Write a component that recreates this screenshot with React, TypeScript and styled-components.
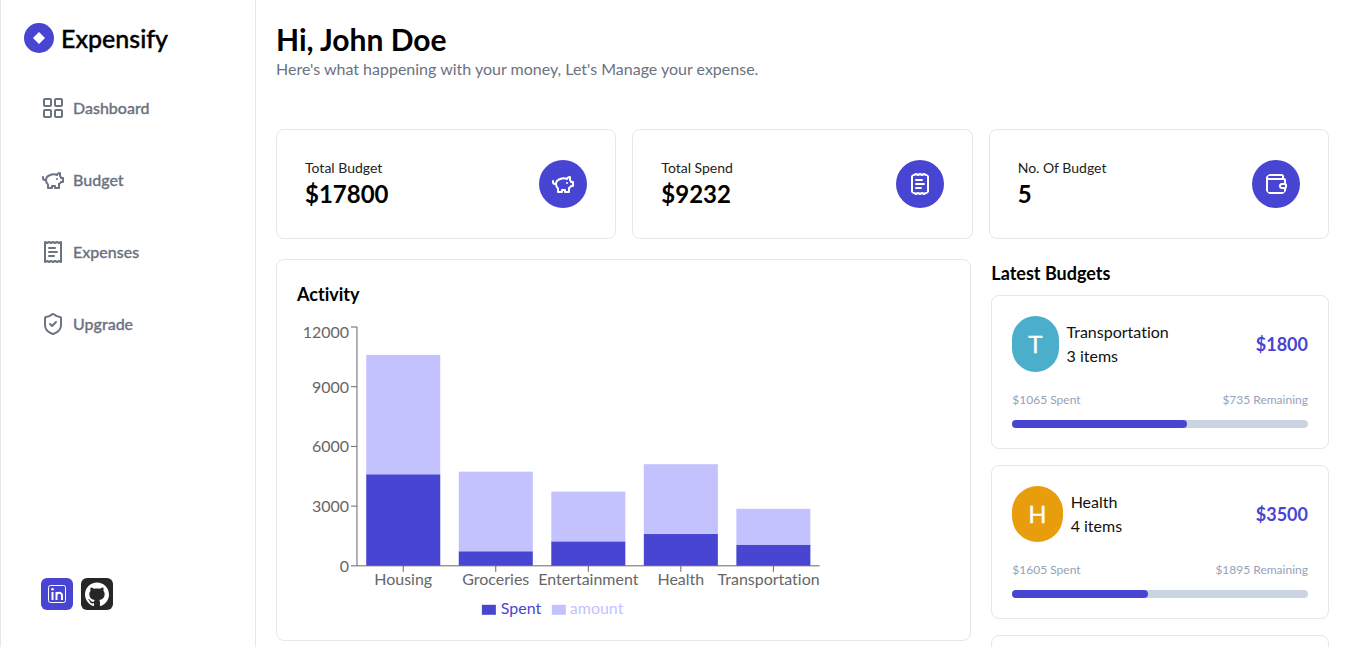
import React from "react";
import styled, { createGlobalStyle } from "styled-components";

const PRIMARY = "#4845d2";
const SOFT = "#c3c2ff";
const BORDER = "#e5e7eb";
const MUTED = "#6b7280";
const AXIS = "#666666";

const GlobalStyle = createGlobalStyle`
  *, *::before, *::after { box-sizing: border-box; }
  html { scrollbar-width: none; }
  body { margin: 0; background: #fff; color: #000; font: 16px/24px Lato, sans-serif; font-variant-ligatures: none; }
  h1, h2, p, ul { margin: 0; padding: 0; }
  ul { list-style: none; }
  a { color: inherit; text-decoration: none; }
`;

const Shell = styled.div`
  display: flex;
  align-items: flex-start;
`;
const Sidebar = styled.aside`
  position: sticky;
  top: 0;
  flex: 0 0 256px;
  height: 100vh;
  display: flex;
  flex-direction: column;
  border: solid ${BORDER};
  border-width: 0 1px;
  padding: 20px 20px 37px 23px;
`;
const Brand = styled.a`
  display: flex;
  align-items: center;
  gap: 7px;
  height: 36px;
  font-size: 25px;
  line-height: 32px;
  font-weight: 500;
  -webkit-text-stroke: 0.4px currentColor;
`;
const Nav = styled.nav`
  flex: 1;
  margin-top: 20px;
`;
const NavLink = styled.a`
  display: flex;
  align-items: center;
  gap: 8px;
  height: 64px;
  padding: 0 17px;
  margin-bottom: 8px;
  color: ${MUTED};
  font-size: 16px;
  font-weight: 500;
  -webkit-text-stroke: 0.3px currentColor;
`;
const Socials = styled.div`
  display: flex;
  gap: 8px;
  padding-left: 17px;
`;
const SocialLink = styled.a`
  display: flex;
  height: 32px;
`;
const Main = styled.main`
  flex: 1;
  min-width: 0;
  padding: 21px 18px 20px 20px;
`;
const Greeting = styled.h1`
  font-size: 30px;
  line-height: 36px;
  font-weight: 700;
`;
const Subtitle = styled.p`
  color: ${MUTED};
`;
const Stats = styled.section`
  display: grid;
  grid-template-columns: repeat(3, minmax(0, 1fr));
  gap: 16px;
  margin-top: 48px;
`;
const Card = styled.div`
  border: 1px solid ${BORDER};
  border-radius: 8px;
  padding: 20px;
`;
const StatCard = styled(Card)`
  display: flex;
  align-items: center;
  justify-content: space-between;
  padding: 28px;
`;
const StatLabel = styled.p`
  font-size: 14px;
  line-height: 20px;
  color: #222;
`;
const StatValue = styled.p`
  font-size: 24px;
  line-height: 32px;
  font-weight: 700;
`;
const Overview = styled.section`
  display: grid;
  grid-template-columns: repeat(3, minmax(0, 1fr));
  align-items: start;
  gap: 20px;
  margin-top: 20px;
`;
const ChartCard = styled(Card)`
  grid-column: span 2;
`;
const Heading = styled.h2`
  font-size: 18px;
  line-height: 28px;
  font-weight: 700;
`;
const Chart = styled.svg`
  display: block;
  width: 80%;
  font-size: 16px;
`;
const BudgetList = styled.ul`
  display: grid;
  gap: 16px;
  margin-top: 8px;
`;
const BudgetTop = styled.div`
  display: flex;
  align-items: center;
  gap: 8px;
`;
const Avatar = styled.span<{ $color: string }>`
  padding: 12px 16px;
  border-radius: 28px;
  background: ${(p) => p.$color};
  color: #fff;
  font-size: 24px;
  line-height: 32px;
  -webkit-text-stroke: 0.3px currentColor;
`;
const BudgetName = styled.div`
  flex: 1;
  color: #111;
`;
const BudgetAmount = styled.strong`
  color: ${PRIMARY};
  font-size: 18px;
  line-height: 28px;
`;
const Split = styled.div`
  display: flex;
  justify-content: space-between;
  margin: 20px 0 12px;
  color: #94a3b8;
  font-size: 12px;
  line-height: 16px;
`;
const Track = styled.div`
  height: 8px;
  border-radius: 4px;
  background: #cbd5e1;
`;
const Fill = styled.div`
  height: 8px;
  border-radius: 4px;
  background: ${PRIMARY};
`;
const Badge = styled.svg`
  width: 48px;
  height: 48px;
  padding: 12px;
  border-radius: 50%;
  background: ${PRIMARY};
  color: #fff;
`;

const glyphs = {
  grid: (
    <>
      <rect width="7" height="7" x="3" y="3" rx="1" />
      <rect width="7" height="7" x="14" y="3" rx="1" />
      <rect width="7" height="7" x="14" y="14" rx="1" />
      <rect width="7" height="7" x="3" y="14" rx="1" />
    </>
  ),
  piggy: (
    <>
      <path d="M19 5c-1.5 0-2.8 1.4-3 2-3.5-1.5-11-.3-11 5 0 1.8 0 3 2 4.5V20h4v-2h3v2h4v-4c1-.5 1.7-1 2-2h2v-4h-2c0-1-.5-1.5-1-2V5z" />
      <path d="M2 9v1c0 1.1.9 2 2 2h1" />
      <path d="M16 11h.01" />
    </>
  ),
  receipt: (
    <>
      <path d="M4 2v20l2-1 2 1 2-1 2 1 2-1 2 1 2-1 2 1V2l-2 1-2-1-2 1-2-1-2 1-2-1-2 1Z" />
      <path d="M14 8H8M16 12H8M13 16H8" />
    </>
  ),
  shield: (
    <>
      <path d="M20 13c0 5-3.5 7.5-7.66 8.95a1 1 0 0 1-.67-.01C7.5 20.5 4 18 4 13V6a1 1 0 0 1 1-1c2 0 4.5-1.2 6.24-2.72a1.17 1.17 0 0 1 1.52 0C14.51 3.81 17 5 19 5a1 1 0 0 1 1 1z" />
      <path d="m9 12 2 2 4-4" />
    </>
  ),
  wallet: (
    <>
      <path d="M19 7V4a1 1 0 0 0-1-1H5a2 2 0 0 0 0 4h15a1 1 0 0 1 1 1v4h-3a2 2 0 0 0 0 4h3a1 1 0 0 0 1-1v-2a1 1 0 0 0-1-1" />
      <path d="M3 5v14a2 2 0 0 0 2 2h15a1 1 0 0 0 1-1v-4" />
    </>
  ),
};
type Glyph = keyof typeof glyphs;
const stroke = {
  viewBox: "0 0 24 24",
  fill: "none",
  stroke: "currentColor",
  strokeWidth: 2,
  strokeLinecap: "round",
  strokeLinejoin: "round",
  "aria-hidden": true,
} as const;

const links: { label: string; icon: Glyph }[] = [
  { label: "Dashboard", icon: "grid" },
  { label: "Budget", icon: "piggy" },
  { label: "Expenses", icon: "receipt" },
  { label: "Upgrade", icon: "shield" },
];
const stats: { label: string; value: string; icon: Glyph }[] = [
  { label: "Total Budget", value: "$17800", icon: "piggy" },
  { label: "Total Spend", value: "$9232", icon: "receipt" },
  { label: "No. Of Budget", value: "5", icon: "wallet" },
];
const series = [
  { name: "Housing", spent: 4600, amount: 6000 },
  { name: "Groceries", spent: 732, amount: 4000 },
  { name: "Entertainment", spent: 1230, amount: 2500 },
  { name: "Health", spent: 1605, amount: 3500 },
  { name: "Transportation", spent: 1065, amount: 1800 },
];
const budgets = [
  { name: "Transportation", items: 3, amount: 1800, spent: 1065, color: "#4baeca" },
  { name: "Health", items: 4, amount: 3500, spent: 1605, color: "#e89d0c" },
  { name: "Entertainment", items: 4, amount: 2500, spent: 1230, color: "#4baeca" },
];

const LEFT = 60;
const RIGHT = 523;
const TOP = 19;
const BASE = 258;
const band = (RIGHT - LEFT) / series.length;
const scale = (v: number) => (v / 12000) * (BASE - TOP);

function ActivityChart() {
  return (
    <Chart viewBox="0 0 523 312" role="img" aria-label="Spent and amount by budget">
      {series.map((d, i) => {
        const x = LEFT + band * (i + 0.1);
        const s = scale(d.spent);
        const a = scale(d.amount);
        return (
          <g key={d.name}>
            <rect x={x} y={BASE - s} width={band * 0.8} height={s} fill={PRIMARY} />
            <rect x={x} y={BASE - s - a} width={band * 0.8} height={a} fill={SOFT} />
          </g>
        );
      })}
      <g stroke={AXIS}>
        <path d={`M${LEFT} ${TOP}V${BASE}H${RIGHT}`} fill="none" />
        {[0, 3000, 6000, 9000, 12000].map((v) => (
          <path key={v} d={`M${LEFT - 6} ${BASE - scale(v)}h6`} />
        ))}
        {series.map((d, i) => (
          <path key={d.name} d={`M${LEFT + band * (i + 0.5)} ${BASE}v6`} />
        ))}
      </g>
      <g fill={AXIS} textAnchor="end">
        {[0, 3000, 6000, 9000].map((v) => (
          <text key={v} x={LEFT - 8} y={BASE - scale(v) + 6}>{v}</text>
        ))}
        <text x={LEFT - 8} y={TOP + 11}>12000</text>
      </g>
      <g fill={AXIS} textAnchor="middle">
        {series.slice(0, 4).map((d, i) => (
          <text key={d.name} x={LEFT + band * (i + 0.5)} y={BASE + 19}>{d.name}</text>
        ))}
        <text x={RIGHT} y={BASE + 19} textAnchor="end">Transportation</text>
      </g>
      <rect x="185" y="297" width="14" height="10" fill={PRIMARY} />
      <text x="204" y="306" fill={PRIMARY}>Spent</text>
      <rect x="255" y="297" width="14" height="10" fill={SOFT} />
      <text x="273" y="306" fill={SOFT}>amount</text>
    </Chart>
  );
}

export default function App() {
  return (
    <>
      <GlobalStyle />
      <Shell>
        <Sidebar>
          <Brand href="#">
            <svg width="30" height="30" viewBox="0 0 30 30" aria-hidden="true">
              <circle cx="15" cy="15" r="15" fill={PRIMARY} />
              <path d="M15 9l6 6-6 6-6-6z" fill="#fff" />
            </svg>
            Expensify
          </Brand>
          <Nav>
            {links.map((l) => (
              <NavLink key={l.label} href="#">
                <svg width="24" height="24" {...stroke}>{glyphs[l.icon]}</svg>
                {l.label}
              </NavLink>
            ))}
          </Nav>
          <Socials>
            <SocialLink href="#" aria-label="LinkedIn">
              <svg width="32" height="32" viewBox="0 0 32 32">
                <rect width="32" height="32" rx="6" fill={PRIMARY} />
                <rect x="7.5" y="7.5" width="17" height="17" rx="2" fill="none" stroke="#fff" />
                <g stroke="#fff" strokeWidth="2" fill="none">
                  <path d="M11.5 14v8M15.5 14v8M15.5 17.5c0-3.5 5.5-3.8 5.5 0V22" />
                </g>
                <circle cx="11.5" cy="11.3" r="1.3" fill="#fff" />
              </svg>
            </SocialLink>
            <SocialLink href="#" aria-label="GitHub">
              <svg width="32" height="32" viewBox="0 0 32 32">
                <rect width="32" height="32" rx="6" fill="#262626" />
                <path
                  transform="translate(4 4.3)"
                  fill="#fff"
                  d="M12 .297c-6.63 0-12 5.373-12 12 0 5.303 3.438 9.8 8.205 11.385.6.113.82-.258.82-.577 0-.285-.01-1.04-.015-2.04-3.338.724-4.042-1.61-4.042-1.61C4.422 18.07 3.633 17.7 3.633 17.7c-1.087-.744.084-.729.084-.729 1.205.084 1.838 1.236 1.838 1.236 1.07 1.835 2.809 1.305 3.495.998.108-.776.417-1.305.76-1.605-2.665-.3-5.466-1.332-5.466-5.93 0-1.31.465-2.38 1.235-3.22-.135-.303-.54-1.523.105-3.176 0 0 1.005-.322 3.3 1.23.96-.267 1.98-.399 3-.405 1.02.006 2.04.138 3 .405 2.28-1.552 3.285-1.23 3.285-1.23.645 1.653.24 2.873.12 3.176.765.84 1.23 1.91 1.23 3.22 0 4.61-2.805 5.625-5.475 5.92.42.36.81 1.096.81 2.22 0 1.606-.015 2.896-.015 3.286 0 .315.21.69.825.57C20.565 22.092 24 17.592 24 12.297c0-6.627-5.373-12-12-12"
                />
              </svg>
            </SocialLink>
          </Socials>
        </Sidebar>
        <Main>
          <Greeting>Hi, John Doe</Greeting>
          <Subtitle>Here's what happening with your money, Let's Manage your expense.</Subtitle>
          <Stats>
            {stats.map((s) => (
              <StatCard key={s.label}>
                <div>
                  <StatLabel>{s.label}</StatLabel>
                  <StatValue>{s.value}</StatValue>
                </div>
                <Badge {...stroke}>{glyphs[s.icon]}</Badge>
              </StatCard>
            ))}
          </Stats>
          <Overview>
            <ChartCard>
              <Heading>Activity</Heading>
              <ActivityChart />
            </ChartCard>
            <div>
              <Heading>Latest Budgets</Heading>
              <BudgetList>
                {budgets.map((b) => (
                  <Card as="li" key={b.name}>
                    <BudgetTop>
                      <Avatar $color={b.color}>{b.name[0]}</Avatar>
                      <BudgetName>
                        <p>{b.name}</p>
                        <p>{`${b.items} items`}</p>
                      </BudgetName>
                      <BudgetAmount>{`$${b.amount}`}</BudgetAmount>
                    </BudgetTop>
                    <Split>
                      <span>{`$${b.spent} Spent`}</span>
                      <span>{`$${b.amount - b.spent} Remaining`}</span>
                    </Split>
                    <Track>
                      <Fill style={{ width: `${(b.spent / b.amount) * 100}%` }} />
                    </Track>
                  </Card>
                ))}
              </BudgetList>
            </div>
          </Overview>
        </Main>
      </Shell>
    </>
  );
}
